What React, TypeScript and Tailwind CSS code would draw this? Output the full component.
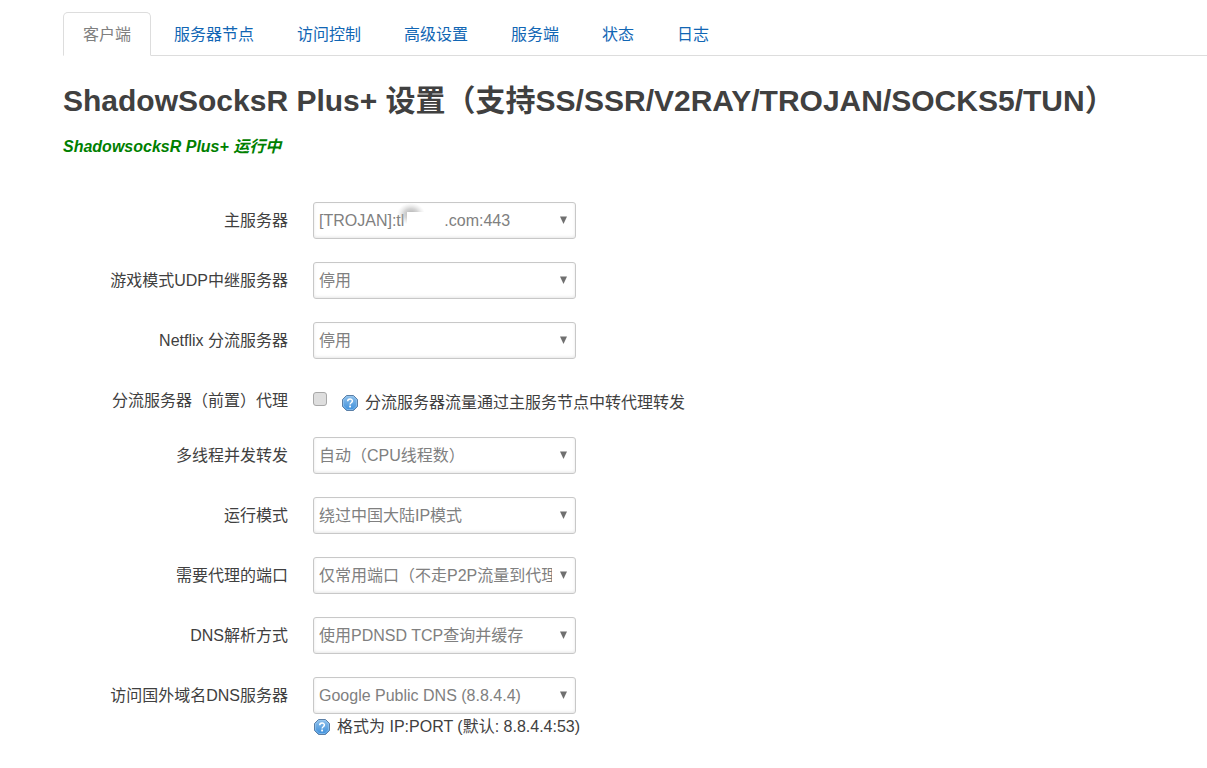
import { useState } from "react";
import type { ReactNode } from "react";

const tabs = ["客户端", "服务器节点", "访问控制", "高级设置", "服务端", "状态", "日志"];

function HelpIcon() {
  return (
    <svg className="size-4 shrink-0" viewBox="0 0 16 16" aria-hidden="true">
      <defs>
        <linearGradient id="help-fill" x1="0" y1="0" x2="0" y2="1">
          <stop offset="0" stopColor="#8fc0ea" />
          <stop offset="1" stopColor="#3d8fdb" />
        </linearGradient>
      </defs>
      <path
        d="M4.500 .5h7L15.500 4.500v7L11.500 15.500h-7L.5 11.500v-7z"
        fill="url(#help-fill)"
        stroke="#5b7fa6"
        strokeLinejoin="round"
      />
      <path d="M5 1.500h6l3.500 3.500v6l-3.500 3.500H5L1.500 11V5z" fill="none" stroke="#9dccf4" strokeOpacity=".6" />
      <path d="M5.700 6.200C5.700 3.300 10.400 3.300 10.400 6c0 1.800-2.300 1.700-2.300 3.500" fill="none" stroke="#fff" strokeWidth="1.500" />
      <rect x="7.200" y="10.600" width="1.800" height="1.800" fill="#fff" />
    </svg>
  );
}

function Row({ id, label, children }: { id: string; label: string; children: ReactNode }) {
  return (
    <div className="flex items-start gap-[25px]">
      <label htmlFor={id} className="w-[225px] shrink-0 pt-[7px] text-right leading-6">
        {label}
      </label>
      <div className="min-w-0">{children}</div>
    </div>
  );
}

function Select({ id, value, masked }: { id: string; value: string; masked?: boolean }) {
  return (
    <div className="relative w-[263px]">
      <select
        id={id}
        className="block h-[37px] w-full appearance-none rounded-[3px] border border-[#c8c8c8] bg-white pr-[23px] pl-[5px] text-[#808080] shadow-[inset_0_-1px_3px_rgba(0,0,0,0.1)]"
      >
        <option>{value}</option>
      </select>
      <svg
        className="pointer-events-none absolute top-[14px] right-[9px] h-[8px] w-[7px]"
        viewBox="0 0 7 8"
        aria-hidden="true"
      >
        <path d="M0 .5h7L3.500 8z" fill="#707070" />
      </svg>
      {masked && (
        <svg
          className="pointer-events-none absolute top-0 left-[84px] h-[30px] w-[50px]"
          viewBox="0 0 50 30"
          aria-hidden="true"
        >
          <defs>
            <radialGradient id="smudge">
              <stop offset="0" stopColor="#999" stopOpacity=".8" />
              <stop offset=".5" stopColor="#aaa" stopOpacity=".5" />
              <stop offset="1" stopColor="#ccc" stopOpacity="0" />
            </radialGradient>
          </defs>
          <ellipse cx="14" cy="12" rx="14" ry="11" fill="url(#smudge)" />
          <path d="M10 10h36v18H10z" fill="#fff" />
        </svg>
      )}
    </div>
  );
}

export default function App() {
  const [active, setActive] = useState(tabs[0]);
  return (
    <main className="bg-white pt-3 pb-7 pl-[63px] font-['Liberation_Sans','Noto_Sans_CJK_SC',sans-serif] text-base text-[#404040]">
      <nav className="flex gap-[3px] border-b border-[#ddd]">
        {tabs.map((tab) => (
          <a
            key={tab}
            href="#"
            onClick={(e) => {
              e.preventDefault();
              setActive(tab);
            }}
            className={
              tab === active
                ? "-mb-px flex h-11 items-center rounded-t-[5px] border border-[#ddd] border-b-white bg-white px-[19px] pt-0.5 text-[#808080]"
                : "flex h-[43px] items-center px-5 pt-[3px] text-[#1166b4]"
            }
          >
            {tab}
          </a>
        ))}
      </nav>
      <h1 className="mt-[23px] text-[30px] leading-11 font-bold">
        ShadowSocksR Plus+ 设置（支持SS/SSR/V2RAY/TROJAN/SOCKS5/TUN）
      </h1>
      <p className="mt-3 leading-6 font-bold text-[#008000] italic">ShadowsocksR Plus+ 运行中</p>

      <form className="mt-[43px]">
        <div className="flex flex-col gap-[23px]">
          <Row id="main-server" label="主服务器">
            <Select
              id="main-server"
              value={"[TROJAN]:tl\u00a0\u00a0\u00a0\u00a0\u00a0\u00a0\u00a0\u00a0\u00a0.com:443"}
              masked
            />
          </Row>
          <Row id="udp-relay" label="游戏模式UDP中继服务器">
            <Select id="udp-relay" value="停用" />
          </Row>
          <Row id="netflix" label="Netflix 分流服务器">
            <Select id="netflix" value="停用" />
          </Row>
          <Row id="front-proxy" label="分流服务器（前置）代理">
            <div className="flex items-start">
              <input
                id="front-proxy"
                type="checkbox"
                className="mt-[10px] size-[14px] appearance-none rounded-[3px] border border-[#a8a8a8] bg-[#dedede] checked:bg-[#808080]"
              />
              <p className="ml-[15px] flex items-center gap-[7px] pt-[11px] pb-px leading-5">
                <HelpIcon />
                分流服务器流量通过主服务节点中转代理转发
              </p>
            </div>
          </Row>
          <Row id="threads" label="多线程并发转发">
            <Select id="threads" value="自动（CPU线程数）" />
          </Row>
          <Row id="run-mode" label="运行模式">
            <Select id="run-mode" value="绕过中国大陆IP模式" />
          </Row>
          <Row id="ports" label="需要代理的端口">
            <Select id="ports" value="仅常用端口（不走P2P流量到代理）" />
          </Row>
          <Row id="dns-mode" label="DNS解析方式">
            <Select id="dns-mode" value="使用PDNSD TCP查询并缓存" />
          </Row>
          <Row id="foreign-dns" label="访问国外域名DNS服务器">
            <Select id="foreign-dns" value="Google Public DNS (8.8.4.4)" />
            <p className="mt-px ml-px flex items-center gap-[7px] leading-6">
              <HelpIcon />
              格式为 IP:PORT (默认: 8.8.4.4:53)
            </p>
          </Row>
        </div>
      </form>
    </main>
  );
}
